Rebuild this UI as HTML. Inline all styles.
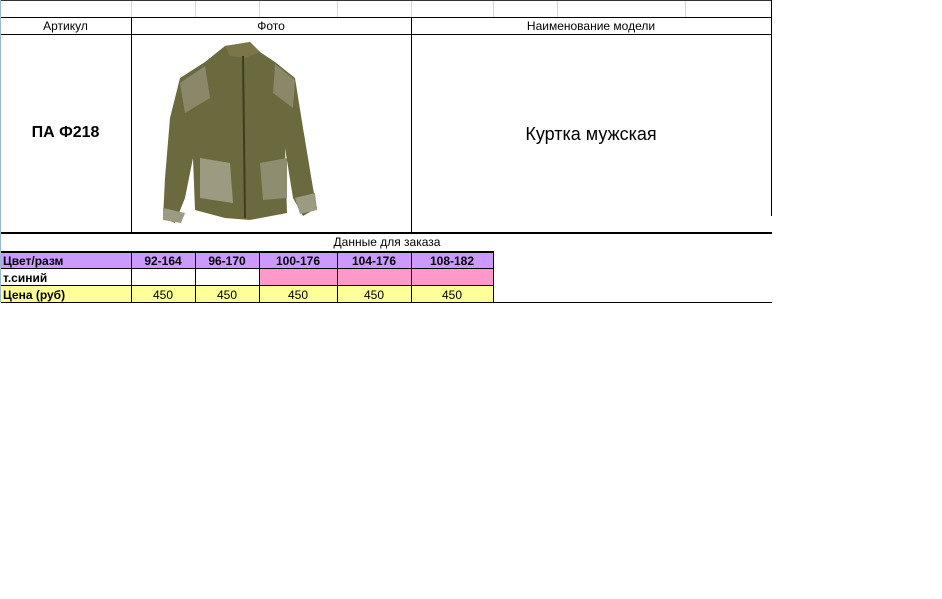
<!DOCTYPE html>
<html><head><meta charset="utf-8"><style>
body{margin:0;width:942px;height:599px;background:#fff;position:relative;overflow:hidden;font-family:"Liberation Sans",Arial,sans-serif;}
.a{position:absolute}
.h{position:absolute;height:1px;background:#000}
.v{position:absolute;width:1px;background:#000}
.g{position:absolute;width:1px;background:#d8d8d8}
.t{position:absolute;text-align:center;font-size:12px;color:#000}
.b{font-weight:bold}
</style></head><body>
<!-- top gray grid row -->
<div class="g" style="left:131px;top:0;height:17px"></div>
<div class="g" style="left:195px;top:0;height:17px"></div>
<div class="g" style="left:259px;top:0;height:17px"></div>
<div class="g" style="left:337px;top:0;height:17px"></div>
<div class="g" style="left:411px;top:0;height:17px"></div>
<div class="g" style="left:493px;top:0;height:17px"></div>
<div class="g" style="left:557px;top:0;height:17px"></div>
<div class="g" style="left:685px;top:0;height:17px"></div>
<div class="h" style="left:0;top:0;width:772px;background:#333"></div>
<div class="h" style="left:1px;top:17px;width:771px"></div>
<div class="h" style="left:1px;top:34px;width:771px"></div>
<div class="h" style="left:1px;top:232px;width:771px;height:2px"></div>
<div class="v" style="left:131px;top:17px;height:216px"></div>
<div class="v" style="left:411px;top:17px;height:216px"></div>
<div class="v" style="left:771px;top:0;height:216px"></div>
<div class="v" style="left:0;top:0;height:302px;background:#9bc"></div>
<div class="t" style="left:0;top:19px;width:131px">Артикул</div>
<div class="t" style="left:131px;top:19px;width:280px">Фото</div>
<div class="t" style="left:411px;top:19px;width:360px">Наименование модели</div>
<div class="t b" style="left:0;top:124px;width:131px;font-size:16px">ПА Ф218</div>
<div class="t" style="left:411px;top:124px;width:360px;font-size:18px">Куртка мужская</div>
<svg class="a" style="left:155px;top:38px" width="170" height="190" viewBox="0 0 170 190">
<path d="M70 8 L95 4 L105 14 L120 24 L140 40 L148 90 L158 150 L162 170 L148 178 L138 160 L130 110 L132 175 L95 182 L70 180 L40 172 L38 120 L30 160 L20 185 L8 180 L10 140 L15 80 L25 40 L50 24 Z" fill="#6b6a3e"/>
<path d="M70 8 L95 4 L105 14 L90 20 L75 18 Z" fill="#7a7648"/>
<path d="M45 120 L75 125 L78 165 L45 160 Z" fill="#9c9a80"/>
<path d="M105 125 L132 120 L132 160 L108 162 Z" fill="#8f8d70"/>
<path d="M25 45 L50 28 L55 60 L30 75 Z" fill="#8a8868"/>
<path d="M120 26 L140 42 L138 70 L118 55 Z" fill="#8a8868"/>
<path d="M8 170 L30 175 L26 185 L8 182 Z" fill="#9c9a80"/>
<path d="M140 160 L160 155 L162 172 L145 176 Z" fill="#9c9a80"/>
<line x1="88" y1="18" x2="90" y2="180" stroke="#3e3d22" stroke-width="2"/>
</svg>
<div class="t" style="left:131px;top:235px;width:512px">Данные для заказа</div>
<div class="h" style="left:1px;top:251px;width:493px;height:2px"></div>
<div class="a" style="left:1px;top:253px;width:493px;height:15px;background:#cc99ff"></div>
<div class="a" style="left:259px;top:269px;width:235px;height:16px;background:#ff99cc"></div>
<div class="a" style="left:1px;top:286px;width:493px;height:16px;background:#ffff99"></div>
<div class="h" style="left:1px;top:268px;width:493px"></div>
<div class="h" style="left:1px;top:285px;width:493px"></div>
<div class="h" style="left:1px;top:302px;width:771px"></div>
<div class="v" style="left:131px;top:251px;height:51px"></div>
<div class="v" style="left:195px;top:251px;height:51px"></div>
<div class="v" style="left:259px;top:251px;height:51px"></div>
<div class="v" style="left:337px;top:251px;height:51px"></div>
<div class="v" style="left:411px;top:251px;height:51px"></div>
<div class="v" style="left:493px;top:251px;height:51px"></div>
<div class="t b" style="left:3px;top:254px;text-align:left">Цвет/разм</div>
<div class="t b" style="left:3px;top:271px;text-align:left">т.синий</div>
<div class="t b" style="left:3px;top:288px;text-align:left">Цена (руб)</div>
<div class="t b" style="left:131px;top:254px;width:64px">92-164</div>
<div class="t b" style="left:195px;top:254px;width:64px">96-170</div>
<div class="t b" style="left:259px;top:254px;width:78px">100-176</div>
<div class="t b" style="left:337px;top:254px;width:74px">104-176</div>
<div class="t b" style="left:411px;top:254px;width:82px">108-182</div>
<div class="t" style="left:131px;top:288px;width:64px">450</div>
<div class="t" style="left:195px;top:288px;width:64px">450</div>
<div class="t" style="left:259px;top:288px;width:78px">450</div>
<div class="t" style="left:337px;top:288px;width:74px">450</div>
<div class="t" style="left:411px;top:288px;width:82px">450</div>
</body></html>
